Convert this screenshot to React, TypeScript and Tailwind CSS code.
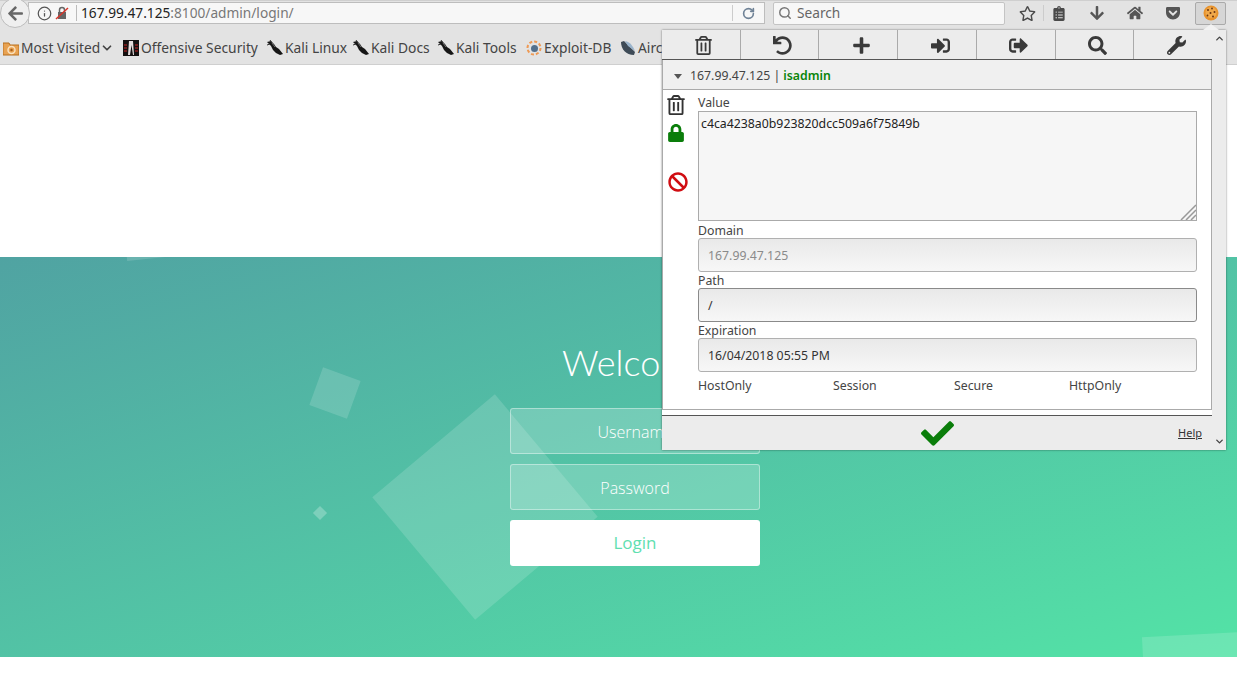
import { FaArrowLeft, FaArrowDown, FaBan, FaCheck, FaClipboardList, FaHome, FaLock, FaPlus, FaRegStar, FaRegTrashAlt, FaSearch, FaSignInAlt, FaSignOutAlt, FaUndo, FaWrench, FaGetPocket } from "react-icons/fa";
import { LuChevronDown, LuChevronUp, LuInfo, LuRotateCw, LuSearch } from "react-icons/lu";

const KaliIcon = () => (
  <svg viewBox="0 0 16 16" className="w-4 h-4 shrink-0">
    <path d="M0 2 L4 1 L7 4 L9 7 L12 9 L16 14 L13 15 L9 13 L6 10 L4 6 Z" fill="#161616" />
    <path d="M3 0 L5 3 M0 5 L3 4" stroke="#333" strokeWidth="1" />
    <path d="M5 3 L8 7" stroke="#8a8a8a" strokeWidth="0.8" />
  </svg>
);

const FolderIcon = () => (
  <svg viewBox="0 0 16 16" className="w-4 h-4 shrink-0">
    <path d="M0 3h6l1 2h9v10H0z" fill="#e8a252" stroke="#b9701f" strokeWidth="1" />
    <circle cx="8.5" cy="10" r="3.5" fill="none" stroke="#fbe2bf" strokeWidth="1.5" />
    <circle cx="8.5" cy="10" r="1.2" fill="#a9601b" />
  </svg>
);

const OffsecIcon = () => (
  <svg viewBox="0 0 16 16" className="w-4 h-4 shrink-0">
    <rect width="16" height="16" fill="#141010" />
    <path d="M6 1h4l1 14h-1L8.5 5 7 15H5z" fill="#e4dcdc" />
    <path d="M1 5h3M1 8h3M1 11h3M12 5h3M12 8h3M12 11h3" stroke="#8c1d1d" strokeWidth="1.5" />
  </svg>
);

const ExploitIcon = () => (
  <svg viewBox="0 0 16 16" className="w-4 h-4 shrink-0">
    <circle cx="8" cy="8" r="6.5" fill="none" stroke="#ee9a55" strokeWidth="2" strokeDasharray="3 2" />
    <circle cx="8.5" cy="8.5" r="3.5" fill="#54708c" />
  </svg>
);

const AirIcon = () => (
  <svg viewBox="0 0 16 16" className="w-4 h-4 shrink-0">
    <path d="M1 2 C1 9 6 15 14 15 L15 12 L4 1 Z" fill="#3e4b57" />
    <path d="M5 1 C10 2 13 6 15 11 L8 6 Z" fill="#9ab4cc" />
  </svg>
);

const CookieIcon = () => (
  <svg viewBox="0 0 16 16" className="w-4 h-4">
    <circle cx="8" cy="8" r="7.5" fill="#e8932d" />
    <circle cx="8" cy="7.5" r="5.5" fill="#f0a94a" />
    <g fill="#6b3410">
      <circle cx="5" cy="5" r="1" />
      <circle cx="9" cy="3.5" r="0.9" />
      <circle cx="11.5" cy="7" r="1" />
      <circle cx="7.5" cy="8" r="1" />
      <circle cx="4.5" cy="10.5" r="0.9" />
      <circle cx="10" cy="11.5" r="1" />
    </g>
  </svg>
);

const Bookmark = ({ icon, label, cls }: { icon: React.ReactNode; label: string; cls: string }) => (
  <div className={`flex items-center gap-[2px] shrink-0 ${cls}`}>
    {icon}
    <span>{label}</span>
  </div>
);

const Field = ({ label, value, muted, dark }: { label: string; value: string; muted?: boolean; dark?: boolean }) => (
  <div className="flex flex-col">
    <span className="h-[16px] leading-[18px] text-[#444]">{label}</span>
    <div
      className={`h-[34px] px-[9px] pt-[2px] flex items-center rounded-[3px] border bg-gradient-to-b from-[#e9e9e9] to-[#f7f7f7] ${
        dark ? "border-[#8a8a8a]" : "border-[#b0b0b0]"
      } ${muted ? "text-[#8a8a8a]" : "text-[#333]"}`}
    >
      {value}
    </div>
  </div>
);

const tools = [FaRegTrashAlt, FaUndo, FaPlus, FaSignInAlt, FaSignOutAlt, FaSearch, FaWrench];

const Popup = () => (
  <div className="absolute left-[662px] top-[30px] w-[564px] h-[420px] flex bg-[#ececec] shadow-[0_0_2px_rgba(0,0,0,0.5)] text-[12.3px]">
    <div className="w-[550px] flex flex-col">
      <div className="h-[30px] flex border-b border-[#555] text-[#3a3a3a]">
        {tools.map((Icon, i) => (
          <div key={i} className="flex-1 flex items-center justify-center pl-[6px] pt-[2px] border-r border-[#aaa] last:border-r-0">
            <Icon className="w-[19px] h-[19px]" />
          </div>
        ))}
      </div>
      <div className="h-[30px] flex items-center pl-[11px] pt-[3px] bg-[#f0f0f0] border-b border-[#aaa] border-x text-[#444]">
        <span className="w-0 h-0 border-x-[4px] border-x-transparent border-t-[5px] border-t-[#555]" />
        <span className="ml-[8px]">167.99.47.125 | </span>
        <span className="ml-[3px] font-semibold text-[#0a850a]">isadmin</span>
      </div>
      <div className="h-[320px] flex bg-white border-x border-b border-[#aaa]">
        <div className="w-[35px] flex flex-col items-center pt-[5px] pr-[10px]">
          <FaRegTrashAlt className="w-[18px] h-[20px] text-[#333]" />
          <FaLock className="w-[16px] h-[18px] mt-[9px] text-[#0a7d0a]" />
          <FaBan className="w-[20px] h-[20px] mt-[30px] ml-[4px] text-[#d00d12]" />
        </div>
        <div className="w-[499px] pt-[5px] flex flex-col gap-0">
          <span className="h-[16px] leading-[16px] text-[#444]">Value</span>
          <div className="relative h-[110px] px-[2px] py-[3px] border border-[#aaa] bg-[#f6f6f6] leading-[18px] text-[#222] mb-[1px]">
            c4ca4238a0b923820dcc509a6f75849b
            <svg viewBox="0 0 16 16" className="absolute right-0 bottom-0 w-4 h-4" stroke="#999" strokeWidth="1.5">
              <path d="M1 16 L16 1 M6 16 L16 6 M11 16 L16 11" />
            </svg>
          </div>
          <Field label="Domain" value="167.99.47.125" muted />
          <Field label="Path" value="/" dark />
          <Field label="Expiration" value="16/04/2018 05:55 PM" />
          <div className="mt-[5px] grid grid-cols-[135px_121px_115px_auto] leading-[18px] text-[#444]">
            <span>HostOnly</span>
            <span>Session</span>
            <span>Secure</span>
            <span>HttpOnly</span>
          </div>
        </div>
      </div>
      <div className="h-[5px] bg-white" />
      <div className="flex-1 border-t border-[#555] relative flex items-center justify-center">
        <FaCheck className="w-[33px] h-[33px] text-[#0a7d0a]" />
        <span className="absolute right-[10px] top-[9px] text-[11px] underline text-[#333]">Help</span>
      </div>
    </div>
    <div className="flex-1 flex flex-col items-center justify-between py-[3px] text-[#444]">
      <LuChevronUp className="w-[11px] h-[11px]" strokeWidth={3} />
      <LuChevronDown className="w-[11px] h-[11px]" strokeWidth={3} />
    </div>
  </div>
);

export default function App() {
  return (
    <div className="relative w-[1237px] h-[677px] overflow-hidden bg-white font-['Noto_Sans',sans-serif]">
      <div className="h-[26px] flex items-center bg-[#e3e3e3] border-t border-[#cfcfcf] pb-[1px]">
        <div className="w-[30px] h-[30px] rounded-full bg-[#efefef] border border-[#bdbdbd] flex items-center justify-center z-10 shrink-0">
          <FaArrowLeft className="w-[17px] h-[17px] text-[#666]" />
        </div>
        <div className="-ml-[2px] w-[737px] h-[22px] bg-[#f7f7f7] border border-[#bdbdbd] flex items-center pl-[8px] shrink-0">
          <LuInfo className="w-[15px] h-[15px] text-[#555]" />
          <svg viewBox="0 0 14 14" className="ml-[3px] w-[14px] h-[14px]">
            <path d="M3 6h8v7H3z" fill="#666" />
            <path d="M4.5 6V4a2.5 2.5 0 0 1 5 0v2" fill="none" stroke="#666" strokeWidth="1.5" />
            <path d="M1 13 L13 2" stroke="#d9352a" strokeWidth="1.5" />
          </svg>
          <span className="ml-[7px] w-px h-[16px] bg-[#bbb]" />
          <span className="ml-[4px] text-[13.7px] text-[#222]">
            167.99.47.125<span className="text-[#777]">:8100/admin/login/</span>
          </span>
          <span className="ml-auto w-px h-[16px] bg-[#ccc]" />
          <LuRotateCw className="mx-[9px] w-[13px] h-[13px] text-[#6f8296]" strokeWidth={3} />
        </div>
        <div className="ml-[8px] w-[232px] h-[23px] bg-[#f7f7f7] border border-[#c4c4c4] rounded-[2px] flex items-center pl-[4px] text-[13.7px] text-[#666] shrink-0">
          <LuSearch className="w-[14px] h-[14px] text-[#777]" strokeWidth={2.5} />
          <span className="ml-[5px]">Search</span>
        </div>
        <div className="flex items-center text-[#4a4a4a]">
          <FaRegStar className="ml-[14px] w-[17px] h-[17px]" />
          <span className="ml-[7px] w-px h-[16px] bg-[#ccc]" />
          <FaClipboardList className="ml-[8px] w-[14px] h-[15px]" />
          <FaArrowDown className="ml-[23px] w-[16px] h-[16px] text-[#555]" />
          <FaHome className="ml-[22px] w-[16px] h-[16px] text-[#555]" />
          <FaGetPocket className="ml-[22px] w-[16px] h-[16px] text-[#555]" />
          <div className="ml-[14px] w-[31px] h-[23px] rounded-[2px] border border-[#aaa] bg-[#d6d6d6] flex items-center justify-center">
            <CookieIcon />
          </div>
        </div>
      </div>
      <div className="h-[39px] flex items-center pl-[3px] pt-[6px] bg-[#e3e3e3] border-b border-[#cfcfcf] text-[13.8px] text-[#444] whitespace-nowrap overflow-hidden">
        <Bookmark icon={<FolderIcon />} label="Most Visited" cls="w-[97px]" />
        <LuChevronDown className="w-[14px] h-[14px] shrink-0" strokeWidth={3} />
        <Bookmark icon={<OffsecIcon />} label="Offensive Security" cls="ml-[9px] w-[144px]" />
        <Bookmark icon={<KaliIcon />} label="Kali Linux" cls="w-[86px]" />
        <Bookmark icon={<KaliIcon />} label="Kali Docs" cls="w-[85px]" />
        <Bookmark icon={<KaliIcon />} label="Kali Tools" cls="w-[88px]" />
        <Bookmark icon={<ExploitIcon />} label="Exploit-DB" cls="w-[94px]" />
        <Bookmark icon={<AirIcon />} label="Aircrack-ng" cls="" />
      </div>
      <div className="h-[192px]" />
      <div className="relative h-[400px] overflow-hidden bg-gradient-to-br from-[#50a3a2] to-[#53e3a6] font-['Open_Sans',sans-serif] text-white">
        <div className="absolute left-[125px] -top-[38px] w-[40px] h-[40px] -rotate-[6deg] bg-white/15" />
        <div className="absolute left-[315px] top-[116px] w-[40px] h-[40px] rotate-[20deg] bg-white/15" />
        <div className="absolute left-[405px] top-[170px] w-[160px] h-[160px] rotate-[50deg] bg-white/15" />
        <div className="absolute left-[315px] top-[251px] w-[10px] h-[10px] rotate-45 bg-white/25" />
        <div className="absolute left-[1145px] top-[377px] w-[120px] h-[120px] -rotate-[3deg] bg-white/15" />
        <div className="relative w-[250px] ml-[510px] pt-[80px] flex flex-col gap-[10px]">
          <h1 className="h-[61px] -mx-[40px] text-center text-[36px] font-['Lato',sans-serif] font-light leading-[50px] whitespace-nowrap">Welcome</h1>
          <div className="h-[46px] pt-[1px] rounded-[3px] border border-white/40 bg-white/20 flex items-center justify-center text-[16px] font-light">Username</div>
          <div className="h-[46px] pt-[1px] rounded-[3px] border border-white/40 bg-white/20 flex items-center justify-center text-[16px] font-light">Password</div>
          <div className="h-[46px] rounded-[3px] bg-white flex items-center justify-center text-[17px] text-[#5fe0b0]">Login</div>
        </div>
      </div>
      <Popup />
      <div className="absolute left-[1203px] top-[24px] w-0 h-0 border-x-[8px] border-x-transparent border-b-[6px] border-b-[#f2f2f2]" />
    </div>
  );
}
